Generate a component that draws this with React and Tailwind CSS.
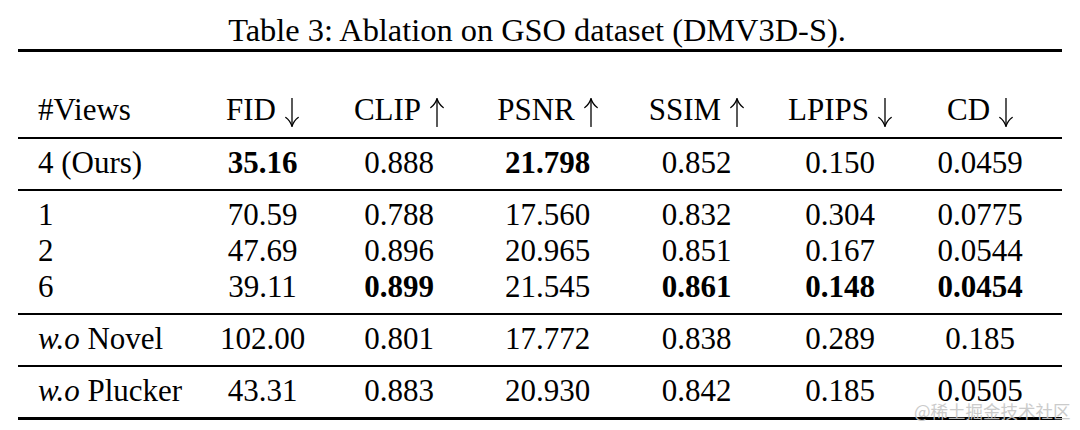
const header = [
  { t: 'FID', dir: 'down' },
  { t: 'CLIP', dir: 'up' },
  { t: 'PSNR', dir: 'up' },
  { t: 'SSIM', dir: 'up' },
  { t: 'LPIPS', dir: 'down' },
  { t: 'CD', dir: 'down' },
]

const groups = [
  [[{ t: '4 (Ours)' }, { t: '35.16', b: true }, { t: '0.888' }, { t: '21.798', b: true }, { t: '0.852' }, { t: '0.150' }, { t: '0.0459' }]],
  [
    [{ t: '1' }, { t: '70.59' }, { t: '0.788' }, { t: '17.560' }, { t: '0.832' }, { t: '0.304' }, { t: '0.0775' }],
    [{ t: '2' }, { t: '47.69' }, { t: '0.896' }, { t: '20.965' }, { t: '0.851' }, { t: '0.167' }, { t: '0.0544' }],
    [{ t: '6' }, { t: '39.11' }, { t: '0.899', b: true }, { t: '21.545' }, { t: '0.861', b: true }, { t: '0.148', b: true }, { t: '0.0454', b: true }],
  ],
  [[{ t: 'Novel', wo: true }, { t: '102.00' }, { t: '0.801' }, { t: '17.772' }, { t: '0.838' }, { t: '0.289' }, { t: '0.185' }]],
  [[{ t: 'Plucker', wo: true }, { t: '43.31' }, { t: '0.883' }, { t: '20.930' }, { t: '0.842' }, { t: '0.185' }, { t: '0.0505' }]],
]

const cols = 'grid grid-cols-[180px_129px_144px_153px_145px_142px_138px]'

// thin math-style arrow, like \uparrow / \downarrow
function Arrow({ dir }) {
  return (
    <svg
      width="14"
      height="29"
      viewBox="0 0 14 29"
      className={`inline-block ml-[9px] align-[-7px] ${dir === 'up' ? 'rotate-180' : ''}`}
      fill="none"
      stroke="black"
      strokeWidth="1.3"
      strokeLinecap="round"
    >
      <path d="M7 0.5 V28" />
      <path d="M0.8 19.5 Q5 22.5 7 28.3 M13.2 19.5 Q9 22.5 7 28.3" />
    </svg>
  )
}

function Cell({ cell, first }) {
  return (
    <div className={first ? 'pl-[20px] text-left whitespace-nowrap' : 'text-center whitespace-nowrap'}>
      {cell.wo && <span className="italic">w.o </span>}
      <span className={cell.b ? 'font-bold' : ''}>{cell.t}</span>
    </div>
  )
}

export default function App() {
  return (
    <div className="relative w-[1080px] h-[430px] overflow-hidden bg-white text-black font-['Liberation_Serif',serif]">
      <div className="pt-[12px] pr-[6px] text-center text-[32.4px] leading-[36px]">
        Table 3: Ablation on GSO dataset (DMV3D-S).
      </div>

      <div className="mx-[18px] mt-[1px] text-[31px] leading-[36px]">
        <div className="h-[3px] bg-black" />

        {/* header */}
        <div className={`${cols} pt-[40px] pb-[9px]`}>
          <div className="pl-[20px]">#Views</div>
          {header.map((h) => (
            <div key={h.t} className="text-center whitespace-nowrap">
              {h.t}
              <Arrow dir={h.dir} />
            </div>
          ))}
        </div>

        {groups.map((rows, gi) => (
          <div key={gi}>
            <div className="h-[2px] bg-black" />
            <div className="pt-[6px] pb-[8px]">
              {rows.map((row, ri) => (
                <div key={ri} className={cols}>
                  {row.map((cell, ci) => (
                    <Cell key={ci} cell={cell} first={ci === 0} />
                  ))}
                </div>
              ))}
            </div>
          </div>
        ))}

        <div className="h-[3px] bg-black" />
      </div>

      {/* watermark */}
      <div className="absolute left-[914px] top-[401px] text-[17.5px] leading-[20px] text-[#c6c6c6] opacity-90 font-['Noto_Sans_CJK_SC',sans-serif]">
        @稀土掘金技术社区
      </div>
    </div>
  )
}
